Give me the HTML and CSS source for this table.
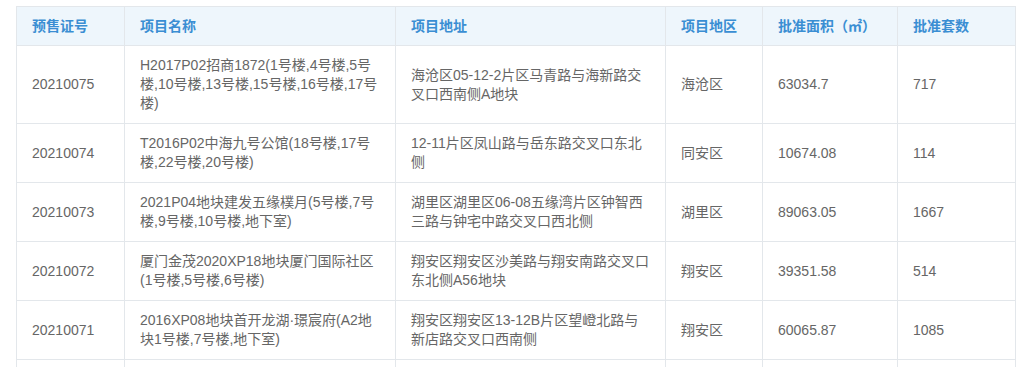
FILE: index.html
```html
<!DOCTYPE html>
<html lang="zh-CN">
<head>
<meta charset="utf-8">
<title>预售证</title>
<link rel="stylesheet" href="styles.css">
</head>
<body>
<div class="wrap">
<table class="presale">
  <colgroup>
    <col class="c1"><col class="c2"><col class="c3"><col class="c4"><col class="c5"><col class="c6">
  </colgroup>
  <thead>
    <tr>
      <th>预售证号</th>
      <th>项目名称</th>
      <th>项目地址</th>
      <th>项目地区</th>
      <th>批准面积（㎡）</th>
      <th>批准套数</th>
    </tr>
  </thead>
  <tbody>
    <tr>
      <td>20210075</td>
      <td>H2017P02招商1872(1号楼,4号楼,5号楼,10号楼,13号楼,15号楼,16号楼,17号楼)</td>
      <td>海沧区05-12-2片区马青路与海新路交叉口西南侧A地块</td>
      <td>海沧区</td>
      <td>63034.7</td>
      <td>717</td>
    </tr>
    <tr>
      <td>20210074</td>
      <td>T2016P02中海九号公馆(18号楼,17号楼,22号楼,20号楼)</td>
      <td>12-11片区凤山路与岳东路交叉口东北侧</td>
      <td>同安区</td>
      <td>10674.08</td>
      <td>114</td>
    </tr>
    <tr>
      <td>20210073</td>
      <td>2021P04地块建发五缘樸月(5号楼,7号楼,9号楼,10号楼,地下室)</td>
      <td>湖里区湖里区06-08五缘湾片区钟智西三路与钟宅中路交叉口西北侧</td>
      <td>湖里区</td>
      <td>89063.05</td>
      <td>1667</td>
    </tr>
    <tr>
      <td>20210072</td>
      <td>厦门金茂2020XP18地块厦门国际社区(1号楼,5号楼,6号楼)</td>
      <td>翔安区翔安区沙美路与翔安南路交叉口东北侧A56地块</td>
      <td>翔安区</td>
      <td>39351.58</td>
      <td>514</td>
    </tr>
    <tr>
      <td>20210071</td>
      <td>2016XP08地块首开龙湖·璟宸府(A2地块1号楼,7号楼,地下室)</td>
      <td>翔安区翔安区13-12B片区望嶝北路与新店路交叉口西南侧</td>
      <td>翔安区</td>
      <td>60065.87</td>
      <td>1085</td>
    </tr>
    <tr class="filler">
      <td>&nbsp;</td><td>&nbsp;</td><td>&nbsp;</td><td>&nbsp;</td><td>&nbsp;</td><td>&nbsp;</td>
    </tr>
  </tbody>
</table>
</div>
</body>
</html>
```

FILE: styles.css
```css
html, body {
  margin: 0;
  padding: 0;
  background: #ffffff;
  overflow: hidden;
}

body {
  font-family: "Liberation Sans", "Noto Sans CJK SC", sans-serif;
  font-size: 14px;
  color: #666666;
}

.wrap {
  padding: 6px 0 0 16px;
}

.presale {
  width: 999px;
  table-layout: fixed;
  border-collapse: collapse;
}

.c1 { width: 108px; }
.c2 { width: 271px; }
.c3 { width: 270px; }
.c4 { width: 97px; }
.c5 { width: 135px; }
.c6 { width: 118px; }

.presale th,
.presale td {
  border: 1px solid #e3e7eb;
  padding: 10px 14px 10px 15px;
  line-height: 19px;
  text-align: left;
  vertical-align: middle;
}

.presale th {
  background: #eef6fc;
  color: #3a8ed3;
  font-weight: bold;
  padding-top: 10px;
  padding-bottom: 9px;
}

.presale td {
  color: #666666;
}
```
